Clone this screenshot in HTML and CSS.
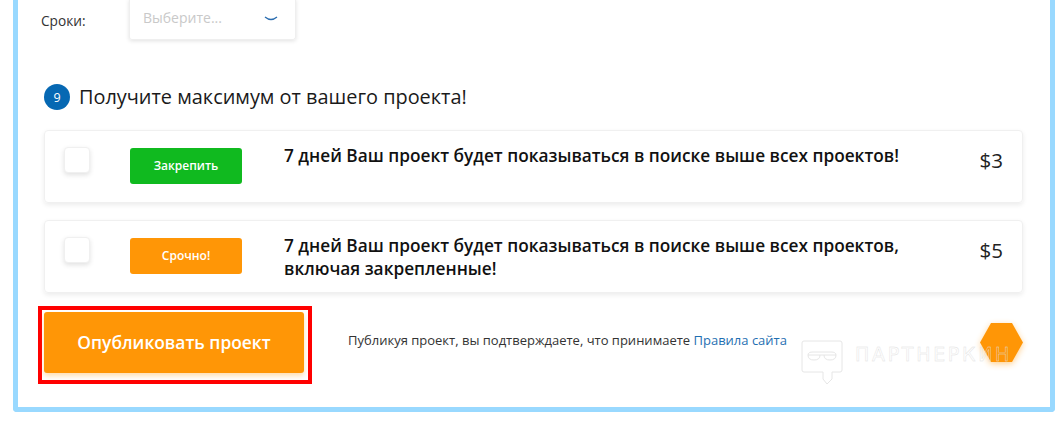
FILE: index.html
```html
<!DOCTYPE html>
<html lang="ru">
<head>
  <meta charset="UTF-8">
  <title>Новый проект</title>
  <link rel="stylesheet" href="styles.css">
</head>
<body>
  <div class="frame">
    <div class="term-row">
      <span class="term-label">Сроки:</span>
      <div class="select">
        <span>Выберите...</span>
        <svg class="chevron" width="14" height="6" viewBox="0 0 14 6"><path d="M1 1 Q7 6 13 1" fill="none" stroke="#2a6db0" stroke-width="1.3"/></svg>
      </div>
    </div>

    <div class="step-title">
      <span class="step-num">9</span>
      <h2>Получите максимум от вашего проекта!</h2>
    </div>

    <div class="option">
      <div class="checkbox"></div>
      <div class="tag tag-green">Закрепить</div>
      <div class="option-text">7 дней Ваш проект будет показываться в поиске выше всех проектов!</div>
      <div class="price">$3</div>
    </div>

    <div class="option">
      <div class="checkbox"></div>
      <div class="tag tag-orange">Срочно!</div>
      <div class="option-text">7 дней Ваш проект будет показываться в поиске выше всех проектов, включая закрепленные!</div>
      <div class="price">$5</div>
    </div>

    <div class="submit-row">
      <div class="highlight">
        <button class="publish">Опубликовать проект</button>
      </div>
      <p class="terms">Публикуя проект, вы подтверждаете, что принимаете <a href="#">Правила сайта</a></p>
      <svg class="hexagon" width="43" height="39" viewBox="0 0 43 39"><polygon points="11,0 32,0 43,19.5 32,39 11,39 0,19.5" fill="#ff9606"/></svg>
    </div>

    <div class="watermark">
      <svg width="42" height="45" viewBox="0 0 42 45" fill="none" stroke="#e6e6e6" stroke-width="1">
        <path d="M3 1 H39 Q41 1 41 3 V30 Q41 32 39 32 H31 V39 L26 44 L22 39 V32 H3 Q1 32 1 30 V3 Q1 1 3 1 Z"/>
        <path d="M7 15 H35 M7 15 Q7 20 13 20 Q19 20 19 15 M23 15 Q23 20 29 20 Q35 20 35 15 M7 15 Q7 12 12 12 H30 Q35 12 35 15"/>
      </svg>
      <span class="watermark-text">ПАРТНЕРКИН</span>
    </div>
  </div>
</body>
</html>
```

FILE: styles.css
```css
html, body {
  height: 436px;
  overflow: hidden;
}

body {
  margin: 0;
  font-family: 'Open Sans', sans-serif;
  background-color: #fff;
  color: #1c1c1c;
}

.frame {
  position: relative;
  box-sizing: border-box;
  width: 1042px;
  height: 412px;
  margin-left: 13px;
  padding: 0 27px 0 26px;
  border: 5px solid #99d9ff;
  border-top: none;
  border-radius: 0 0 4px 4px;
}

.term-row {
  display: flex;
  align-items: center;
  height: 40px;
  margin-left: -3px;
}

.term-label {
  width: 88px;
  font-size: 13.7px;
  color: #333;
}

.select {
  box-sizing: border-box;
  display: flex;
  align-items: center;
  justify-content: space-between;
  width: 167px;
  height: 41px;
  margin-top: -1px;
  padding: 0 17px 3px 13px;
  border: 1px solid #efefef;
  border-top: none;
  border-radius: 0 0 3px 3px;
  box-shadow: 0 1px 4px rgba(0, 0, 0, 0.12);
  font-size: 14px;
  color: #c9c9c9;
}

.chevron {
  margin-top: 3px;
}

.step-title {
  display: flex;
  align-items: center;
  gap: 9px;
  margin-top: 44px;
  height: 26px;
}

.step-num {
  display: flex;
  align-items: center;
  justify-content: center;
  width: 26px;
  height: 26px;
  border-radius: 50%;
  background-color: #0668b3;
  color: #fff;
  font-size: 12.5px;
}

.step-title h2 {
  margin: -2px 0 0;
  font-size: 19.9px;
  font-weight: 400;
  color: #1a1a1a;
}

.option {
  box-sizing: border-box;
  display: flex;
  align-items: flex-start;
  height: 73px;
  margin-top: 20px;
  padding: 17px 19px 0 19px;
  border: 1px solid #f0f0f0;
  border-radius: 4px;
  box-shadow: 0 2px 5px rgba(0, 0, 0, 0.08);
}

.option + .option {
  margin-top: 17px;
}

.checkbox {
  box-sizing: border-box;
  flex: none;
  width: 26px;
  height: 26px;
  margin-top: -1px;
  border: 1px solid #f0f0f0;
  border-radius: 4px;
  background-color: #fff;
  box-shadow: 0 2px 5px rgba(0, 0, 0, 0.12);
}

.tag {
  flex: none;
  width: 112px;
  height: 36px;
  margin-left: 40px;
  border-radius: 3px;
  color: #fff;
  font-size: 12px;
  font-weight: 600;
  line-height: 36px;
  text-align: center;
}

.tag-green {
  background-color: #10ba1f;
}

.tag-orange {
  background-color: #ff9606;
}

.option-text {
  flex: 1;
  margin: -4px 0 0 42px;
  font-size: 17.25px;
  font-weight: 600;
  line-height: 23px;
  color: #111;
}

.price {
  flex: none;
  width: 42px;
  margin-top: -1px;
  font-size: 20.5px;
  line-height: 27px;
  text-align: right;
  color: #222;
}

.submit-row {
  display: flex;
  align-items: center;
  margin: 13px 0 0 -6px;
}

.highlight {
  flex: none;
  padding: 2px 4px 7px 2px;
  border: 4px solid #ff0000;
}

.publish {
  display: block;
  width: 260px;
  height: 61px;
  padding: 0 0 2px;
  border: none;
  border-radius: 3px;
  background-color: #ff9606;
  box-shadow: 0 3px 5px rgba(255, 150, 6, 0.3);
  color: #fff;
  font-family: inherit;
  font-size: 17.4px;
  font-weight: 600;
}

.terms {
  flex: 1;
  margin: -11px 0 0 36px;
  font-size: 13px;
  color: #333;
}

.terms a {
  color: #1f6fb2;
  text-decoration: none;
}

.hexagon {
  flex: none;
  margin-top: -5px;
  filter: drop-shadow(0 2px 3px rgba(255, 150, 6, 0.45));
}

.watermark {
  position: absolute;
  left: 783px;
  top: 340px;
  display: flex;
  align-items: flex-start;
  gap: 12px;
  pointer-events: none;
}

.watermark-text {
  margin-top: 3px;
  font-family: 'DejaVu Sans', sans-serif;
  font-size: 19px;
  letter-spacing: 2.7px;
  color: transparent;
  -webkit-text-stroke: 0.4px #dedede;
}
```
